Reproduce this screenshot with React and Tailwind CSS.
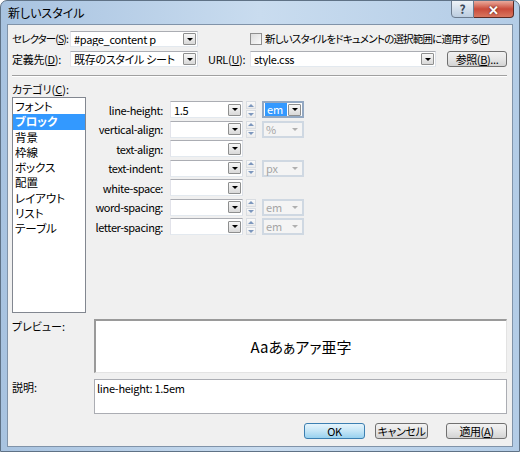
import React from "react";

const FONT = "font-['Noto_Sans_CJK_JP','Noto_Sans',sans-serif] [font-feature-settings:'palt']";

function Tri({ gray }) {
  return (
    <div
      className={`w-0 h-0 border-l-[3px] border-r-[3px] border-t-[3px] border-l-transparent border-r-transparent ${
        gray ? "border-t-[#b0b0b0]" : "border-t-black"
      }`}
    />
  );
}

function DropBtn({ gray }) {
  if (gray) {
    return (
      <div className="w-[13px] h-[12px] mr-[1px] flex items-center justify-center">
        <Tri gray />
      </div>
    );
  }
  return (
    <div className="w-[13px] h-[12px] mr-[1px] border border-[#8e8f8f] rounded-[1px] bg-gradient-to-b from-[#f7f7f7] to-[#d9d9d9] flex items-center justify-center">
      <Tri />
    </div>
  );
}

function Combo({ w, h = "h-[16px]", children }) {
  return (
    <div
      className={`${w} ${h} shrink-0 bg-white border border-[#abadb3] border-b-[#e3e9ef] border-l-[#e2e3ea] border-r-[#dbdfe6] flex items-center`}
    >
      <div className="flex-1 pl-[3px] text-[11px] leading-[14px] tracking-[-0.3px] whitespace-nowrap overflow-hidden">
        {children}
      </div>
      <DropBtn />
    </div>
  );
}

function Spinner() {
  return (
    <div className="w-[10px] h-[17px] shrink-0 flex flex-col gap-[1px]">
      <div className="flex-1 border border-[#d9dde2] bg-gradient-to-b from-[#fafafa] to-[#ececec] flex items-center justify-center">
        <div className="w-0 h-0 border-l-[3px] border-r-[3px] border-b-[3px] border-l-transparent border-r-transparent border-b-[#7d97bd]" />
      </div>
      <div className="flex-1 border border-[#d9dde2] bg-gradient-to-b from-[#fafafa] to-[#ececec] flex items-center justify-center">
        <div className="w-0 h-0 border-l-[3px] border-r-[3px] border-t-[3px] border-l-transparent border-r-transparent border-t-[#7d97bd]" />
      </div>
    </div>
  );
}

function Unit({ text, enabled }) {
  if (enabled) {
    return (
      <div className="w-[42px] h-[17px] shrink-0 bg-white border-2 border-[#93a8c2] flex items-center">
        <div className="flex-1 pl-[1px] flex">
          <span className="bg-[#3399ff] text-white text-[11px] leading-[13px] px-[2px] pr-[4px]">{text}</span>
        </div>
        <DropBtn />
      </div>
    );
  }
  return (
    <div className="w-[42px] h-[17px] shrink-0 bg-[#f4f4f4] border-2 border-[#cfd8e2] flex items-center">
      <div className="flex-1 pl-[2px] text-[11px] leading-[13px] text-[#a5a5a5]">{text}</div>
      <DropBtn gray />
    </div>
  );
}

function Button({ w, def, children }) {
  return (
    <div
      className={`${w} h-[16px] rounded-[3px] border flex items-center justify-center text-[11px] leading-none whitespace-nowrap tracking-[-0.4px] ${
        def
          ? "border-[#3c7fb1] bg-gradient-to-b from-[#e5f4fc] via-[#c4e5f6] to-[#98d1ef]"
          : "border-[#707070] bg-gradient-to-b from-[#f2f2f2] via-[#e6e6e6] to-[#d3d3d3]"
      }`}
    >
      {children}
    </div>
  );
}

const props = [
  { label: "line-height:", value: "1.5", spin: true, unit: "em", enabled: true },
  { label: "vertical-align:", spin: true, unit: "%" },
  { label: "text-align:" },
  { label: "text-indent:", spin: true, unit: "px" },
  { label: "white-space:" },
  { label: "word-spacing:", spin: true, unit: "em" },
  { label: "letter-spacing:", spin: true, unit: "em" },
];

const cats = ["フォント", "ブロック", "背景", "枠線", "ボックス", "配置", "レイアウト", "リスト", "テーブル"];

export default function App() {
  return (
    <div className={`${FONT} w-[520px] h-[452px] text-black`}>
      <div className="w-[520px] h-[452px] flex flex-col rounded-t-[7px] border border-[#5f7286] bg-gradient-to-r from-[#a8c3e0] via-[#c9dcef] to-[#b3cce6] overflow-hidden">
        {/* Title bar */}
        <div className="h-[23px] shrink-0 flex items-start">
          <div className="pl-[7px] pt-[4px] text-[12px] leading-[16px] whitespace-nowrap">新しいスタイル</div>
          <div className="ml-auto mr-[5px] flex -mt-[1px]">
            <div className="w-[23px] h-[18px] rounded-bl-[4px] border border-[#6b7b8e] bg-gradient-to-b from-[#eef3f8] via-[#d3dfec] to-[#bccde0] flex items-center justify-center text-[12px] font-bold text-[#3a4757] leading-none">
              ?
            </div>
            <div className="w-[40px] h-[18px] rounded-br-[4px] border border-l-0 border-[#5b2a24] bg-gradient-to-b from-[#e9a99c] via-[#c94a3a] to-[#d9765f] flex items-center justify-center text-white font-bold text-[13px] leading-none [text-shadow:0_0_2px_#3a1510]">
              ✕
            </div>
          </div>
        </div>

        {/* Client */}
        <div className="mx-[6px] mb-[4px] flex-1 border border-[#8093a9] bg-[#f0f0f0] flex flex-col pt-[6px] pl-[4px] pr-[5px] text-[11px]">
          {/* Row 1 */}
          <div className="h-[16px] flex items-center">
            <div className="w-[58px] shrink-0 text-[10.5px] leading-[14px] whitespace-nowrap tracking-[-0.9px]">
              セレクター(<u>S</u>):
            </div>
            <Combo w="w-[128px]">#page_content p</Combo>
            <div className="ml-[52px] w-[12px] h-[12px] shrink-0 border border-[#8f8f8f] bg-gradient-to-br from-[#dcdcdc] to-[#fbfbfb]" />
            <div className="ml-[3px] text-[10.5px] leading-[14px] whitespace-nowrap tracking-[-0.8px]">
              新しいスタイルをドキュメントの選択範囲に適用する(<u>P</u>)
            </div>
          </div>
          {/* Row 2 */}
          <div className="mt-[4px] h-[16px] flex items-center">
            <div className="w-[58px] shrink-0 leading-[14px] whitespace-nowrap tracking-[-0.3px]">
              定義先(<u>D</u>):
            </div>
            <Combo w="w-[128px]">既存のスタイル シート</Combo>
            <div className="ml-[10px] w-[42px] shrink-0 leading-[14px] whitespace-nowrap tracking-[-0.3px]">
              URL(<u>U</u>):
            </div>
            <Combo w="w-[186px]">style.css</Combo>
            <div className="ml-[11px]">
              <Button w="w-[60px]">
                参照(<u>B</u>)...
              </Button>
            </div>
          </div>
          {/* Separator */}
          <div className="mt-[8px] h-[2px] border-t border-[#a0a0a0] border-b border-b-white" />
          {/* Category label */}
          <div className="mt-[6px] h-[12px] leading-[12px] whitespace-nowrap">
            カテゴリ(<u>C</u>):
          </div>
          {/* Main */}
          <div className="mt-[2px] flex">
            <div className="w-[74px] h-[216px] bg-white border border-[#828790] pt-[1px] text-[11.5px]">
              {cats.map((c, i) => (
                <div
                  key={c}
                  className={`h-[15.3px] leading-[15px] pl-[2px] whitespace-nowrap ${
                    i === 1 ? "bg-[#3399ff] text-white font-bold" : ""
                  }`}
                >
                  {c}
                </div>
              ))}
            </div>
            <div className="ml-[4px] pt-[3px] flex flex-col">
              {props.map((p) => (
                <div key={p.label} className="h-[19.5px] flex items-center">
                  <div className="w-[73px] text-right leading-[14px] tracking-[-0.4px] whitespace-nowrap">
                    {p.label}
                  </div>
                  <div className="ml-[7px]">
                    <Combo w="w-[73px]" h="h-[17px]">
                      {p.value || ""}
                    </Combo>
                  </div>
                  {p.spin && (
                    <>
                      <div className="ml-[3px]">
                        <Spinner />
                      </div>
                      <div className="ml-[6px]">
                        <Unit text={p.unit} enabled={p.enabled} />
                      </div>
                    </>
                  )}
                </div>
              ))}
            </div>
          </div>
          {/* Preview */}
          <div className="mt-[6px] flex">
            <div className="w-[82px] pt-[1px] leading-[12px] whitespace-nowrap">プレビュー:</div>
            <div className="w-[413px] h-[54px] bg-white border-t-2 border-l-2 border-[#9a9a9a] border-r border-b border-r-[#e3e3e3] border-b-[#e3e3e3] flex items-center justify-center text-[15px] leading-none">
              <span>Aaあぁアァ亜字</span>
            </div>
          </div>
          {/* Description */}
          <div className="mt-[6px] flex">
            <div className="w-[82px] pt-[2px] leading-[12px] whitespace-nowrap">説明:</div>
            <div className="w-[413px] h-[35px] bg-white border border-[#abadb3] px-[2px] pt-[2px] leading-[12px] tracking-[-0.3px]">
              line-height: 1.5em
            </div>
          </div>
          {/* Buttons */}
          <div className="mt-[9px] flex justify-end">
            <Button w="w-[61px]" def>
              OK
            </Button>
            <div className="ml-[10px]">
              <Button w="w-[53px]">キャンセル</Button>
            </div>
            <div className="ml-[18px]">
              <Button w="w-[61px]">
                適用(<u>A</u>)
              </Button>
            </div>
          </div>
        </div>
      </div>
    </div>
  );
}
